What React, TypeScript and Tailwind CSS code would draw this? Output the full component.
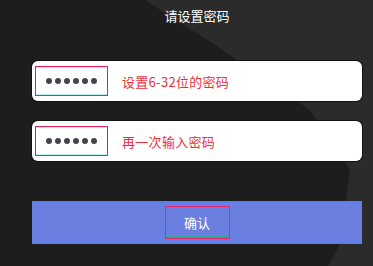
import React from 'react';

const font = { fontFamily: '"Noto Sans CJK SC", "Noto Sans", sans-serif' };

function Dots() {
  return (
    <div className="flex items-center gap-[3px] pl-[10px]">
      {[0, 1, 2, 3, 4, 5].map((i) => (
        <span key={i} className="block h-[6px] w-[6px] rounded-full bg-[#44444c]" />
      ))}
    </div>
  );
}

function PasswordField({ hint }: { hint: string }) {
  return (
    <div className="flex h-[40px] items-center rounded-[6px] bg-white pl-[3px] shadow-[0_0_0_1px_#111]">
      <div className="flex h-[30px] w-[73px] items-center border border-[#e0245e] shadow-[inset_0_1px_0_#bdf2f5,inset_0_-1px_0_#bdf2f5]">
        <Dots />
      </div>
      <span className="ml-[14px] text-[13px] leading-none tracking-[0.3px] text-[#ec2f3a]">{hint}</span>
    </div>
  );
}

export default function App() {
  return (
    <div className="relative h-[266px] w-[373px] overflow-hidden bg-[#1d1d1d]" style={font}>
      <svg className="absolute inset-0" width="373" height="266" aria-hidden="true">
        <polygon
          points="145,0 373,0 373,266 328,266 340,245 350,170 310,110 215,45"
          fill="#2b2b2b"
        />
      </svg>
      <div className="relative ml-[32px] flex w-[330px] flex-col">
        <div className="mt-[6px] h-[20px] text-center text-[13px] leading-[20px] text-white">请设置密码</div>
        <div className="mt-[35px]">
          <PasswordField hint="设置6-32位的密码" />
        </div>
        <div className="mt-[20px]">
          <PasswordField hint="再一次输入密码" />
        </div>
        <div className="mt-[40px] flex h-[43px] items-center justify-center border-y-2 border-[#5b7ef0] bg-[#6a7fe0]">
          <div className="flex h-[33px] w-[65px] items-center justify-center border border-[#e8246a] shadow-[inset_0_-2px_0_#2aa6a0]">
            <span className="text-[13px] leading-none text-white">确认</span>
          </div>
        </div>
      </div>
    </div>
  );
}
